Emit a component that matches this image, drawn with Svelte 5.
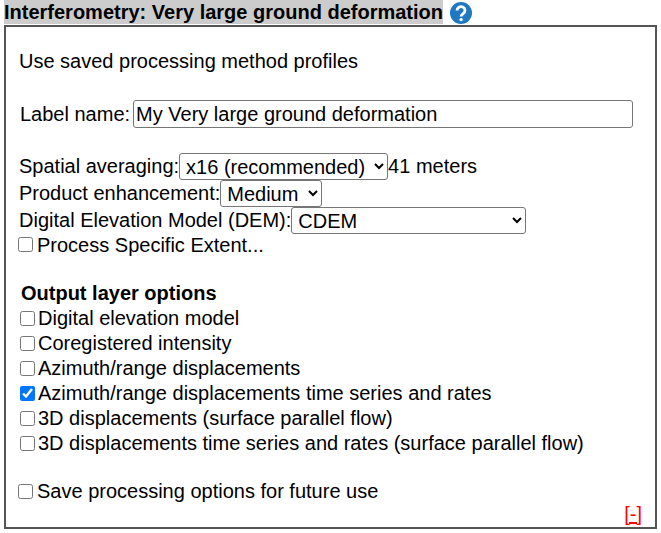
<script>
  let label = $state("My Very large ground deformation");
  const layers = [
    { name: "Digital elevation model", on: false },
    { name: "Coregistered intensity", on: false },
    { name: "Azimuth/range displacements", on: false },
    { name: "Azimuth/range displacements time series and rates", on: true },
    { name: "3D displacements (surface parallel flow)", on: false },
    { name: "3D displacements time series and rates (surface parallel flow)", on: false },
  ];
</script>

<div class="panel">
  <div class="head">
    <span class="title">Interferometry: Very large ground deformation</span>
    <svg class="help" width="24" height="24" viewBox="0 0 24 24" aria-hidden="true">
      <circle cx="12" cy="12" r="11" fill="#1f78c1" />
      <path d="M8 9.5a4 3.8 0 1 1 6.2 3.1c-1.4 1-2.1 1.6-2.1 3" fill="none" stroke="#fff" stroke-width="2.8" />
      <circle cx="12.1" cy="18.6" r="1.7" fill="#fff" />
    </svg>
  </div>

  <div class="box">
    <p class="profiles">Use saved processing method profiles</p>

    <div class="label-row">
      <span>Label name:</span>
      <input type="text" bind:value={label} />
    </div>

    <div class="settings">
      <div class="row">
        <span>Spatial averaging:</span>
        <select class="sel-avg"><option>x16 (recommended)</option></select>
        <span>41 meters</span>
      </div>
      <div class="row">
        <span>Product enhancement:</span>
        <select class="sel-enh"><option>Medium</option></select>
      </div>
      <div class="row">
        <span>Digital Elevation Model (DEM):</span>
        <select class="sel-dem"><option>CDEM</option></select>
      </div>
      <label class="check extent"><input type="checkbox" />Process Specific Extent...</label>
    </div>

    <div class="layers">
      <h4>Output layer options</h4>
      {#each layers as layer}
        <label class="check"><input type="checkbox" checked={layer.on} />{layer.name}</label>
      {/each}
    </div>

    <label class="check save"><input type="checkbox" />Save processing options for future use</label>

    <a class="collapse" href="#top">[-]</a>
  </div>
</div>

<style>
  :global(body) {
    background: #fff;
  }

  .panel {
    padding: 0 4px;
    font-family: "Liberation Sans", Arial, sans-serif;
    font-size: 20px;
    color: #000;
  }

  .head {
    display: flex;
    gap: 6px;
    height: 25px;
  }

  .title {
    background: #ccc;
    font-weight: bold;
    line-height: 25px;
    height: 24px;
  }

  .help {
    flex: none;
    margin-top: 1px;
  }

  .box {
    position: relative;
    box-sizing: border-box;
    height: 504px;
    padding: 22px 13px 0 12px;
    border: 2px solid #555;
  }

  .profiles {
    margin: 0 0 0 1px;
    line-height: 24px;
  }

  .label-row {
    display: flex;
    align-items: center;
    gap: 3px;
    margin: 26px 0 0 2px;
    height: 30px;
  }

  .label-row input {
    box-sizing: border-box;
    width: 500px;
    height: 28px;
    padding: 1px 2px;
    font: inherit;
    border: 1px solid #767676;
    border-radius: 3px;
  }

  .settings {
    margin-top: 24px;
  }

  .row {
    display: flex;
    align-items: center;
    height: 27px;
  }

  .row > span:first-child {
    margin-left: 1px;
  }

  select {
    box-sizing: border-box;
    height: 27px;
    padding-left: 2px;
    font: inherit;
    border: 1px solid #767676;
    border-radius: 3px;
    background: #fff;
  }

  .sel-avg {
    width: 209px;
  }

  .sel-enh {
    width: 102px;
  }

  .sel-dem {
    width: 235px;
  }

  .check {
    display: flex;
    align-items: center;
    height: 25px;
  }

  .check input {
    width: 15px;
    height: 15px;
    margin: 0 4px 0 0;
  }

  .extent {
    margin-top: -1px;
  }

  .extent input {
    margin-bottom: 2px;
  }

  .layers {
    margin: 23px 0 0 2px;
  }

  .layers .check input {
    margin-right: 3px;
  }

  h4 {
    margin: 0 0 0 1px;
    font-size: 20px;
    line-height: 25px;
  }

  .save {
    margin-top: 23px;
  }

  .collapse {
    position: absolute;
    right: 13px;
    bottom: 1px;
    color: #f00;
    font-size: 20px;
  }
</style>
